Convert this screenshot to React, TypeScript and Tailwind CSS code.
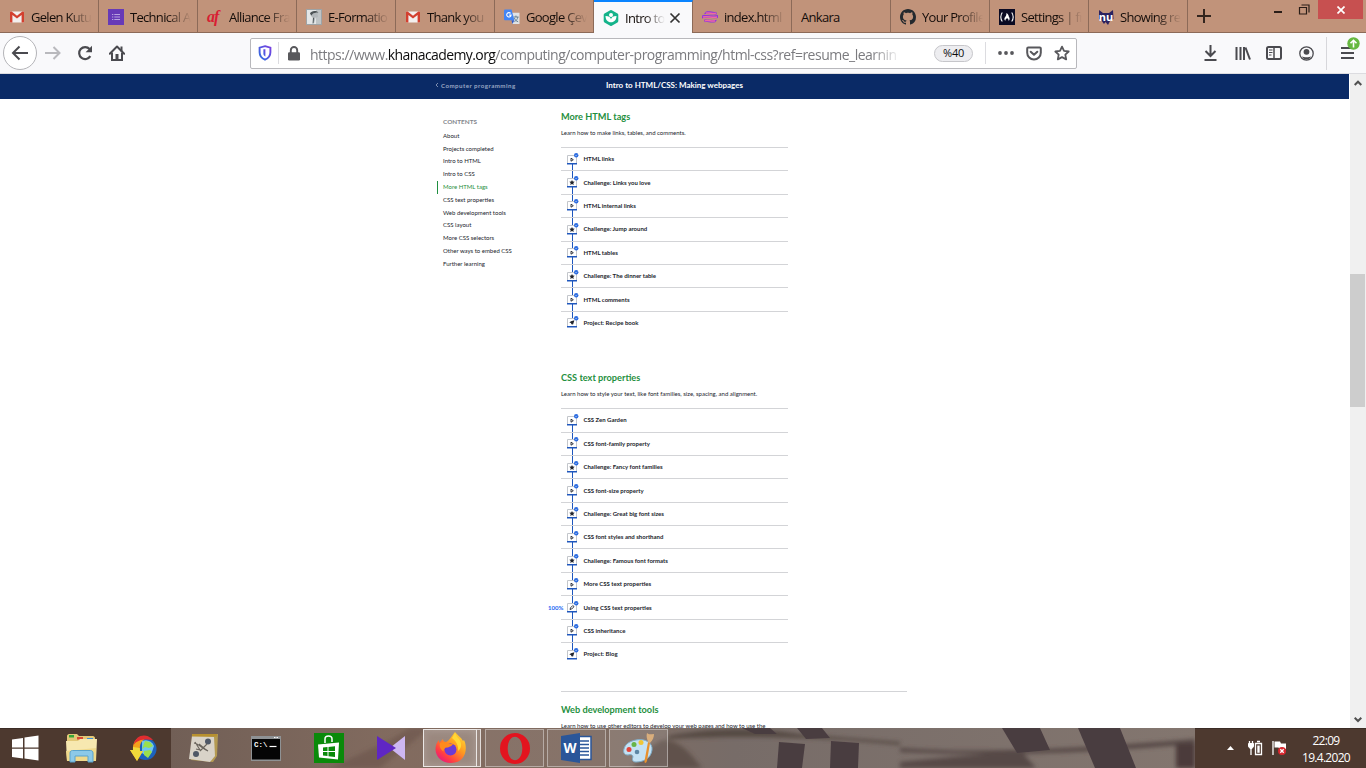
import React from 'react';
import clsx from 'clsx';

type StepKind = 'video' | 'challenge' | 'project' | 'practice';

interface Step {
  title: string;
  kind: StepKind;
  percent?: string;
}

interface BrowserTab {
  title: string;
  icon?: React.ReactNode;
  active?: boolean;
}

const htmlSteps: Step[] = [
  { title: 'HTML links', kind: 'video' },
  { title: 'Challenge: Links you love', kind: 'challenge' },
  { title: 'HTML internal links', kind: 'video' },
  { title: 'Challenge: Jump around', kind: 'challenge' },
  { title: 'HTML tables', kind: 'video' },
  { title: 'Challenge: The dinner table', kind: 'challenge' },
  { title: 'HTML comments', kind: 'video' },
  { title: 'Project: Recipe book', kind: 'project' },
];

const cssSteps: Step[] = [
  { title: 'CSS Zen Garden', kind: 'video' },
  { title: 'CSS font-family property', kind: 'video' },
  { title: 'Challenge: Fancy font families', kind: 'challenge' },
  { title: 'CSS font-size property', kind: 'video' },
  { title: 'Challenge: Great big font sizes', kind: 'challenge' },
  { title: 'CSS font styles and shorthand', kind: 'video' },
  { title: 'Challenge: Famous font formats', kind: 'challenge' },
  { title: 'More CSS text properties', kind: 'video' },
  { title: 'Using CSS text properties', kind: 'practice', percent: '100%' },
  { title: 'CSS inheritance', kind: 'video' },
  { title: 'Project: Blog', kind: 'project' },
];

const contents = [
  'About',
  'Projects completed',
  'Intro to HTML',
  'Intro to CSS',
  'More HTML tags',
  'CSS text properties',
  'Web development tools',
  'CSS layout',
  'More CSS selectors',
  'Other ways to embed CSS',
  'Further learning',
];

/* ---------- tab icons ---------- */

const GmailIcon = () => (
  <svg width="16" height="16" viewBox="0 0 16 16">
    <rect x="1" y="2.5" width="14" height="11" rx="1" fill="#f3efee" />
    <path d="M1 3.5v9.2c0 .5.3.8.8.8H3.400V6L8 9.600 12.600 6v7.500h1.600c.5 0 .8-.3.800-.8V3.500c0-.6-.5-1-1-1h-.7L8 6.800 2.700 2.500H2c-.5 0-1 .4-1 1z" fill="#d3402f" />
  </svg>
);

const FormsIcon = () => (
  <svg width="16" height="16" viewBox="0 0 16 16">
    <path d="M0 0h16v16H0z" fill="#673ab7" />
    <path d="M4 5.500h1.300M6.300 5.500H12M4 8h1.300M6.300 8H12M4 10.500h1.300M6.300 10.500H12" stroke="#b9a4e0" strokeWidth="1.100" />
  </svg>
);

const AllianceIcon = () => (
  <span className="flex h-4 w-4 items-center font-['Liberation_Serif',serif] text-[16px] leading-none font-bold tracking-[-1px] text-[#d81e33] italic">
    af
  </span>
);

const PortraitIcon = () => (
  <svg width="16" height="16" viewBox="0 0 16 16">
    <path d="M0 0h16v16H0z" fill="#9da3a6" />
    <path d="M1 1h14v14H1z" fill="#e3e6e7" />
    <path d="M10 1h5v14h-5z" fill="#bfc4c6" />
    <path d="M4 4.500c1-3 7-3.500 8-.5l-.5 1.500.5 2-1 1H9.500L8 14.500H6.500L7 9 5 7z" fill="#b3b8bb" />
    <path d="M4 4.500c1-3 7-3.500 8.500-1-3 0-5 .5-6 1.500L5.500 6.500zM7 8.500l1 .5-.5 5-.8.5z" fill="#4b5255" />
  </svg>
);

const TranslateIcon = () => (
  <svg width="17" height="16" viewBox="0 0 17 16">
    <path d="M7 3.500h9.500v12H9z" fill="#dfe2e6" />
    <path d="M10 8h5.500M12.700 6.500V8M11 13c2-1 3.500-3 3.700-5M11 9c.7 2 2 3.400 4 4" stroke="#607d8b" fill="none" />
    <path d="M1 0h7l3 11.500H1c-.6 0-1-.4-1-1V1c0-.6.400-1 1-1z" fill="#4285f4" />
    <path d="M7 4.200a2.300 2.300 0 1 0 .5 1.800H5.500" stroke="#fff" strokeWidth="1.200" fill="none" />
    <path d="M8 11.500h3L9 15.500z" fill="#2a56c6" />
  </svg>
);

const KhanIcon = () => (
  <svg width="16" height="16" viewBox="0 0 16 16">
    <path d="M7.200.3a1.500 1.500 0 0 1 1.600 0l5.700 3.200c.5.300.8.800.8 1.400v6.200c0 .6-.3 1.100-.8 1.400l-5.700 3.200a1.500 1.500 0 0 1-1.600 0l-5.700-3.200a1.600 1.600 0 0 1-.8-1.400V4.900c0-.6.300-1.100.8-1.400z" fill="#14b38a" />
    <circle cx="8" cy="5" r="2" fill="#fff" />
    <path d="M2.500 6c3.500 0 5.500 1.800 5.500 3.500C8 7.800 10 6 13.500 6c0 3.800-2.200 6.300-5.500 6.300S2.500 9.800 2.500 6z" fill="#fff" />
  </svg>
);

const StripesIcon = () => (
  <svg width="17" height="16" viewBox="0 0 17 16">
    <path d="M4 2.500c4-1.500 8 1 11 0l1 2.500c-5 1-9-1-14 0zM0 6.500c5-1.500 11 1 17-.5v3C11 10 6 8 0 9.500zM2 11c4-1 9 1 14 0l-2 2.500C9 14.500 5 12.500 3 13.500z" fill="#8d35e0" />
    <path d="M4 4c4-1 7 1 11 0M1 8c5-1 10 1 15 0M3 12c4-1 7 1 11 0" stroke="#ef6aa0" fill="none" strokeWidth="1.400" />
  </svg>
);

const GithubIcon = () => (
  <svg width="16" height="16" viewBox="0 0 16 16" fill="#24292e">
    <path d="M8 0C3.580 0 0 3.580 0 8c0 3.540 2.290 6.530 5.470 7.590.4.070.55-.17.55-.38 0-.19-.01-.82-.01-1.490-2.010.37-2.530-.49-2.690-.94-.09-.23-.48-.94-.82-1.130-.28-.15-.68-.52-.01-.53.63-.01 1.080.58 1.230.82.72 1.210 1.870.87 2.330.66.07-.52.28-.87.51-1.070-1.780-.2-3.640-.89-3.640-3.950 0-.87.31-1.590.82-2.150-.08-.2-.36-1.020.08-2.120 0 0 .67-.21 2.200.82.64-.18 1.320-.27 2-.27s1.360.09 2 .27c1.530-1.040 2.200-.82 2.200-.82.44 1.100.16 1.920.08 2.120.51.56.82 1.270.82 2.150 0 3.070-1.870 3.750-3.650 3.950.29.25.54.73.54 1.480 0 1.070-.01 1.930-.01 2.200 0 .21.15.46.55.38A8.010 8.010 0 0 0 16 8c0-4.420-3.580-8-8-8z" />
  </svg>
);

const CampIcon = () => (
  <svg width="16" height="16" viewBox="0 0 16 16">
    <path d="M0 0h16v16H0z" fill="#0a0a23" />
    <path d="M3.300 3.500c-2 2.500-2 6.500 0 9M12.700 3.500c2 2.500 2 6.500 0 9" stroke="#fff" strokeWidth="1.100" fill="none" />
    <path d="M6.300 12c-1.500-1.500-1-3 0-4.200C7.200 6.700 7.600 5.500 7.300 4c2 .8 2.300 2.500 2.600 3.700 1 1.300 1.100 3-.3 4.300.2-1.500-.6-2-1.500-3-.9 1-1.900 1.500-1.800 3z" fill="#fff" />
  </svg>
);

const NuIcon = () => (
  <span className="relative flex h-4 w-4 items-center justify-center">
    <svg className="absolute inset-0" width="16" height="16" viewBox="0 0 16 16">
      <path d="M1 1l4 3h6l4-3 .5 9L12 12l-2 4-2.500-3L6 15l-3-4-2-1z" fill="#2b2260" />
    </svg>
    <span className="relative mb-[2px] font-['Open_Sans',sans-serif] text-[11px] leading-none font-bold text-white">nu</span>
  </span>
);

const tabs: BrowserTab[] = [
  { title: 'Gelen Kutu', icon: <GmailIcon /> },
  { title: 'Technical A', icon: <FormsIcon /> },
  { title: 'Alliance Fra', icon: <AllianceIcon /> },
  { title: 'E-Formatio', icon: <PortraitIcon /> },
  { title: 'Thank you', icon: <GmailIcon /> },
  { title: 'Google Çev', icon: <TranslateIcon /> },
  { title: 'Intro to', icon: <KhanIcon />, active: true },
  { title: 'index.html', icon: <StripesIcon /> },
  { title: 'Ankara' },
  { title: 'Your Profile', icon: <GithubIcon /> },
  { title: 'Settings | fr', icon: <CampIcon /> },
  { title: 'Showing re', icon: <NuIcon /> },
];

const Tab = ({ title, icon, active }: BrowserTab) => (
  <div
    className={clsx(
      'flex h-[33px] w-[99px] shrink-0 items-center border-r pl-[9px]',
      active ? 'border-t-2 border-r-[#8c6a58] border-t-[#0a84ff] bg-[#f9f9fb]' : 'border-b border-[#8c6a58] pt-[2px]',
    )}
  >
    {icon && <span className="mr-[6px] flex w-4 shrink-0 items-center">{icon}</span>}
    <span
      className={clsx(
        'overflow-hidden pt-[2px] text-[13px] tracking-[-0.700px] whitespace-nowrap text-[#140d0a]',
        active ? 'w-[40px] [mask-image:linear-gradient(90deg,#000_50%,transparent)]' : 'w-[61px]',
        !active && icon && '[mask-image:linear-gradient(90deg,#000_60%,transparent)]',
      )}
    >
      {title}
    </span>
    {active && (
      <svg className="ml-[4px] shrink-0" width="12" height="12" viewBox="0 0 12 12">
        <path d="M1.500 1.500l9 9M10.500 1.500l-9 9" stroke="#333" strokeWidth="1.700" />
      </svg>
    )}
  </div>
);

const TabBar = () => (
  <div className="flex h-[33px] bg-[#c1937a]">
    {tabs.map((tab, i) => (
      <Tab key={i} {...tab} />
    ))}
    <div className="flex flex-1 items-start justify-between border-b border-[#8c6a58]">
      <svg className="mt-[9px] ml-[9px]" width="14" height="14" viewBox="0 0 14 14">
        <path d="M7 0v14M0 7h14" stroke="#33251e" strokeWidth="2" />
      </svg>
      <div className="flex items-start pr-[3px]">
        <svg className="mt-[4px] mr-[8px]" width="37" height="12" viewBox="0 0 37 12">
          <path d="M1 8h8" stroke="#2a1d17" strokeWidth="2" />
          <path d="M26.500 3.500h7v6.500h-7zM28.500 1h7.500v7.500" stroke="#2a1d17" strokeWidth="1.200" fill="none" />
        </svg>
        <div className="flex h-[19px] w-[45px] items-center justify-center bg-[#c75050]">
          <svg width="8" height="8" viewBox="0 0 8 8">
            <path d="M.5.500l7 7M7.500.500l-7 7" stroke="#fff" strokeWidth="1.700" />
          </svg>
        </div>
      </div>
    </div>
  </div>
);

const Toolbar = () => (
  <div className="flex h-[41px] items-center border-b border-[#dcdce0] bg-[#f9f9fb]">
    <div className="ml-[3px] flex h-[34px] w-[34px] items-center justify-center rounded-full border border-[#b4b4b8] bg-white">
      <svg width="18" height="16" viewBox="0 0 18 16">
        <path d="M17 8H2.500M8.500 1.500L2 8l6.500 6.500" stroke="#4a4a4f" strokeWidth="2" fill="none" />
      </svg>
    </div>
    <svg className="ml-[8px]" width="16" height="14" viewBox="0 0 16 14">
      <path d="M0 7h14M8.500 1L14.500 7l-6 6" stroke="#b9b9bd" strokeWidth="2" fill="none" />
    </svg>
    <svg className="ml-[16px]" width="16" height="16" viewBox="0 0 16 16">
      <path d="M13.300 11.200A6 6 0 1 1 12.600 4" stroke="#4a4a4f" strokeWidth="2.200" fill="none" />
      <path d="M15 .8v6.400H8.600z" fill="#4a4a4f" />
    </svg>
    <svg className="ml-[16px]" width="16" height="16" viewBox="0 0 16 16">
      <path d="M.8 8.700L8 1.500l7.200 7.200" stroke="#4a4a4f" strokeWidth="2" fill="none" strokeLinejoin="round" strokeLinecap="round" />
      <path d="M3 7.500V15h10V7.500" stroke="#4a4a4f" strokeWidth="2" fill="none" />
      <path d="M6.500 9h3v6h-3z" fill="#4a4a4f" />
      <path d="M11.500 1.500h2v5h-2z" fill="#4a4a4f" />
    </svg>

    <div className="ml-[125px] flex h-[31px] w-[827px] shrink-0 items-center rounded-[2px] border border-[#b8b8bc] bg-white">
      <svg className="ml-[7px]" width="14" height="16" viewBox="0 0 14 16">
        <defs>
          <linearGradient id="shield" x1="0" y1="1" x2="1" y2="0">
            <stop offset="0" stopColor="#2b6fe0" />
            <stop offset="1" stopColor="#7a3fe0" />
          </linearGradient>
        </defs>
        <path d="M7 1.200l5.400 1.500v4.500c0 3.500-2 6-5.400 7.500-3.400-1.500-5.400-4-5.400-7.500V2.700z" fill="#fff" stroke="url(#shield)" strokeWidth="1.900" />
        <path d="M5.400 4.200h2v7.300c-1.300-.6-2-1.500-2-3z" fill="url(#shield)" />
      </svg>
      <div className="ml-[6px] h-[22px] w-px bg-[#dcdce0]" />
      <svg className="ml-[9px]" width="12" height="15" viewBox="0 0 12 15">
        <path d="M2.800 7V4.200a3.200 3.200 0 0 1 6.400 0V7" stroke="#58585c" strokeWidth="1.900" fill="none" />
        <rect x="0" y="6.300" width="12" height="8.200" rx="1.200" fill="#58585c" />
      </svg>
      <div className="ml-[10px] w-[591px] overflow-hidden pt-[2px] text-[14px] tracking-[-0.510px] whitespace-nowrap text-[#7b7b7f] [mask-image:linear-gradient(90deg,#000_95%,transparent)]">
        https://www.<span className="tracking-[-0.600px] text-[#0c0c0d]">khanacademy.org</span>/computing/computer-programming/html-css?ref=resume_learnin
      </div>
      <div className="ml-[33px] flex h-[17px] w-[39px] items-center justify-center rounded-full border border-[#c6c6ca] bg-[#ededf0] pt-px text-[11px] tracking-[-0.300px] text-[#0c0c0d]">
        %40
      </div>
      <div className="ml-[12px] h-[22px] w-px bg-[#dcdce0]" />
      <svg className="ml-[12px]" width="16" height="4" viewBox="0 0 16 4" fill="#58585c">
        <circle cx="2" cy="2" r="1.900" />
        <circle cx="8" cy="2" r="1.900" />
        <circle cx="14" cy="2" r="1.900" />
      </svg>
      <svg className="ml-[12px]" width="16" height="15" viewBox="0 0 16 15" fill="none" stroke="#58585c" strokeWidth="2">
        <path d="M2.200 1.500h11.600c.6 0 1 .4 1 1v4.200a6.800 6.800 0 0 1-13.600 0V2.500c0-.6.400-1 1-1z" />
        <path d="M4.700 5.700L8 8.800l3.300-3.100" strokeLinecap="round" strokeLinejoin="round" />
      </svg>
      <svg className="ml-[12px]" width="16" height="16" viewBox="0 0 16 16">
        <path d="M8 1.600l2 4.300 4.700.6-3.400 3.200.9 4.700L8 12.100l-4.200 2.300.9-4.700L1.300 6.500 6 5.900z" fill="none" stroke="#58585c" strokeWidth="1.800" strokeLinejoin="round" />
      </svg>
    </div>

    <svg className="ml-[127px]" width="13" height="16" viewBox="0 0 13 16" fill="none" stroke="#4a4a4f" strokeWidth="2">
      <path d="M6.500 0v11M1.500 6l5 5 5-5M.500 15h12" />
    </svg>
    <svg className="ml-[18px]" width="16" height="15" viewBox="0 0 16 15" stroke="#4a4a4f" strokeWidth="2">
      <path d="M1.500 1v13M5.500 1v13M9 1v13" />
      <path d="M10.500 1.500l4.500 12" />
    </svg>
    <svg className="ml-[15px]" width="16" height="14" viewBox="0 0 16 14" fill="none" stroke="#4a4a4f">
      <rect x="1" y="1" width="14" height="12" rx="1.500" strokeWidth="2" />
      <path d="M8 1v12" strokeWidth="1.500" />
      <path d="M3 4h3.500M3 6.500h3.500M3 9h2.500" />
    </svg>
    <svg className="ml-[17px]" width="15" height="15" viewBox="0 0 15 15">
      <circle cx="7.500" cy="7.500" r="6.700" fill="none" stroke="#4a4a4f" strokeWidth="1.300" />
      <circle cx="7.500" cy="5.800" r="2.900" fill="#4a4a4f" />
      <path d="M2.800 10.200c2 1.500 7.400 1.500 9.400 0-1 2.200-2.800 3.200-4.700 3.200s-3.700-1-4.700-3.200z" fill="#4a4a4f" />
    </svg>
    <div className="ml-[12px] h-[33px] w-px bg-[#d7d7db]" />
    <div className="relative ml-[14px] flex h-[12px] w-[13px] flex-col justify-between">
      <div className="h-[2px] bg-[#4a4a4f]" />
      <div className="h-[2px] bg-[#4a4a4f]" />
      <div className="h-[2px] bg-[#4a4a4f]" />
      <svg className="absolute -top-[10px] left-[6px]" width="13" height="13" viewBox="0 0 13 13">
        <circle cx="6.500" cy="6.500" r="6.200" fill="#66b840" />
        <path d="M6.500 10.500v-7M3.500 6.300l3-3 3 3" stroke="#fff" strokeWidth="1.600" fill="none" />
      </svg>
    </div>
  </div>
);

/* ---------- lesson list ---------- */

const StepIcon = ({ kind }: { kind: StepKind }) => (
  <svg className="relative mb-[1px] shrink-0" width="12" height="12" viewBox="0 0 12 12">
    <path d="M.500 2.500h9v8h-9z" fill="#fff" stroke="#c3c6cb" strokeWidth="1" />
    <path d="M0 10h10v1.500H0z" fill="#1f57bd" />
    {kind === 'video' && <path d="M4 5.200L6.300 6.700 4 8.200z" fill="#fff" stroke="#21242c" strokeWidth=".9" />}
    {kind === 'challenge' && (
      <path d="M5 4l.8 1.600 1.900.2-1.400 1.300.4 1.900L5 8.100 3.300 9l.4-1.900-1.400-1.300 1.900-.2z" fill="#21242c" />
    )}
    {kind === 'project' && <path d="M7.400 4.200L5.900 9 4.900 7.600 4 8.700V7L2.300 6.600 4 5.200z" fill="#21242c" />}
    {kind === 'practice' && (
      <path d="M3 8.500l.5-1.700 2.300-2.300 1.200 1.200-2.300 2.300z" fill="#fff" stroke="#21242c" strokeWidth=".9" />
    )}
    <circle cx="9.200" cy="2.200" r="2.200" fill="#2b6be0" />
    <path d="M8.200 2.300l.8.7 1.200-1.300" stroke="#dbe7fb" strokeWidth=".5" fill="none" />
  </svg>
);

interface StepRowProps {
  step: Step;
  first: boolean;
  last: boolean;
}

const StepRow = ({ step, first, last }: StepRowProps) => (
  <li className="relative flex h-[23.4px] items-center border-t border-[#d3d4d7] pl-[6px]">
    {step.percent && (
      <span className="absolute -left-[13px] text-[6px] font-bold text-[#1865f2]">{step.percent}</span>
    )}
    <div className="relative flex items-center self-stretch">
      <div
        className={clsx(
          'absolute left-[5px] w-px bg-[#1f57bd]',
          first ? 'top-[14px]' : 'top-0',
          last ? 'h-[8px]' : 'bottom-0',
        )}
      />
      <StepIcon kind={step.kind} />
    </div>
    <span className="mb-[0.800px] ml-[4.500px] text-[6px] font-bold text-[#21242c]">{step.title}</span>
  </li>
);

interface LessonProps {
  title: string;
  description: string;
  steps?: Step[];
}

const Lesson = ({ title, description, steps = [] }: LessonProps) => (
  <section className="w-[227px]">
    <h2 className="h-[12px] text-[9.200px] leading-[12px] font-bold whitespace-nowrap text-[#1f8f40]">{title}</h2>
    <p className="mt-[6px] h-[8px] text-[6px] leading-[8px] whitespace-nowrap text-[#21242c]">{description}</p>
    {steps.length > 0 && (
      <ul className="mt-[10px]">
        {steps.map((step, i) => (
          <StepRow key={step.title} step={step} first={i === 0} last={i === steps.length - 1} />
        ))}
      </ul>
    )}
  </section>
);

const CoursePage = () => (
  <div className="flex h-full w-[1349px] flex-col overflow-hidden bg-white font-['Lato',sans-serif]">
    <header className="flex h-[25px] shrink-0 items-center bg-[#0a2a66]">
      <div className="mb-[2px] flex w-[606px] items-center pl-[435px] text-[6.200px] font-bold tracking-[0.450px] text-[#98a6c3]">
        <svg className="mr-[2px]" width="4" height="6" viewBox="0 0 4 6">
          <path d="M3 1L1 3l2 2" stroke="#98a6c3" strokeWidth=".8" fill="none" />
        </svg>
        Computer programming
      </div>
      <h1 className="mb-[3px] text-[8px] font-bold whitespace-nowrap text-white">Intro to HTML/CSS: Making webpages</h1>
    </header>
    <div className="flex">
      <nav className="ml-[437px] w-[124px] pt-[18px]">
        <h3 className="h-[12.800px] pl-[6px] text-[6.400px] leading-[10px] font-bold text-[#83868c]">CONTENTS</h3>
        <ul>
          {contents.map((item) => (
            <li
              key={item}
              className={clsx(
                'h-[12.800px] border-l pl-[5px] text-[6px] leading-[12.800px]',
                item === 'More HTML tags' ? 'border-[#1f8f40] text-[#1f8f40]' : 'border-transparent text-[#21242c]',
              )}
            >
              {item}
            </li>
          ))}
        </ul>
      </nav>
      <main className="w-[346px] pt-[12px]">
        <Lesson title="More HTML tags" description="Learn how to make links, tables, and comments." steps={htmlSteps} />
        <div className="h-[38px]" />
        <Lesson
          title="CSS text properties"
          description="Learn how to style your text, like font families, size, spacing, and alignment."
          steps={cssSteps}
        />
        <div className="mt-[25.500px] mb-[12px] h-px bg-[#d3d4d7]" />
        <Lesson title="Web development tools" description="Learn how to use other editors to develop your web pages and how to use the" />
      </main>
    </div>
  </div>
);

const Scrollbar = () => (
  <div className="flex w-[17px] flex-col items-center border-l border-white bg-[#f0f0f0]">
    <svg className="mt-[6px]" width="8" height="7" viewBox="0 0 8 7">
      <path d="M.7 5L4 1.700 7.300 5" stroke="#505050" strokeWidth="2" fill="none" />
    </svg>
    <div className="mt-[187px] h-[133px] w-[15px] self-start bg-[#cdcdcd]" />
    <svg className="mt-auto mb-[5px]" width="8" height="7" viewBox="0 0 8 7">
      <path d="M.7 1.700L4 5l3.300-3.300" stroke="#505050" strokeWidth="2" fill="none" />
    </svg>
  </div>
);

/* ---------- taskbar ---------- */

// Fabric photo that shows through behind the running apps
const FabricBackdrop = () => (
  <svg className="absolute inset-0" width="1024" height="40" viewBox="171 0 1024 40" preserveAspectRatio="none">
    <defs>
      <linearGradient id="fabric" x1="0" x2="1" y1="0" y2="0">
        <stop offset="0" stopColor="#715f56" />
        <stop offset=".22" stopColor="#826b5f" />
        <stop offset=".4" stopColor="#806c61" />
        <stop offset=".55" stopColor="#776c68" />
        <stop offset="1" stopColor="#83766f" />
      </linearGradient>
      <filter id="soft">
        <feGaussianBlur stdDeviation="2" />
      </filter>
      <filter id="edge">
        <feGaussianBlur stdDeviation=".6" />
      </filter>
    </defs>
    <path d="M171 0h1024v40H171z" fill="url(#fabric)" />
    <g filter="url(#soft)">
      <path d="M330 40l60-28 20-12h20l-50 40z" fill="#665047" opacity=".5" />
      <path d="M662 12c20 0 30 16 40 28h-70l10-16z" fill="#56463f" opacity=".7" />
      <path d="M668 8c50-9 90-8 130-2l102 8v3c-80-8-150-10-232-6z" fill="#554843" />
      <path d="M900 20c60 4 130 5 295-9v5c-120 10-200 12-295 8z" fill="#544745" />
      <path d="M900 34c40-4 80-8 122-10l14 16H900z" fill="#564947" />
      <path d="M1176 16h19v24h-19z" fill="#4b3b3a" />
    </g>
    <g filter="url(#edge)" fill="#4a3d41">
      <path d="M742 0h28l7 6h-22zM797 0h25l8 10-24 1zM779 14l26 2-3 24h-25zM831 13l28 2-1 25h-28z" />
      <path d="M1002 0h38l10 22-33 3zM1078 0h42l16 40h-41z" />
    </g>
  </svg>
);

const StartIcon = () => (
  <svg width="27" height="26" viewBox="0 0 27 26" fill="#fff">
    <path d="M0 4.500L11 3v9.500H0zM12.500 2.600L26.500.5v12h-14zM0 13.800h11v9.600L0 22zM12.500 13.800h14v11.700l-14-2z" />
  </svg>
);

const ExplorerIcon = () => (
  <svg width="33" height="30" viewBox="0 0 33 30">
    <path d="M2 3c0-1 1-2 2-2h8l2 2h14c1 0 2 1 2 2v22H2z" fill="#e3c877" />
    <path d="M4 2h5v2.500H4z" fill="#38a838" />
    <path d="M12 4h6v2.500h-6z" fill="#d94a32" />
    <path d="M22 5h6v2.500h-6z" fill="#3b8fd8" />
    <path d="M1 8h12l2-2h17l-1 22H2z" fill="#f7e8b0" />
    <path d="M1 18l30-3v13H2z" fill="#efd98c" />
    <path d="M5 29V20c0-1.500 1-2.500 2.500-2.500h18c1.500 0 2.500 1 2.500 2.500v9h-5v-6H10v6z" fill="#8cc9e8" stroke="#5aa3cc" />
  </svg>
);

const GlobeArrowIcon = () => (
  <svg width="27" height="27" viewBox="0 0 27 27">
    <circle cx="15.500" cy="14" r="11" fill="#1c62bd" />
    <path d="M12 6c5-2 10 0 12 5l-2 6-4 5-6-4z" fill="#6fc5ef" />
    <path d="M15 6l5 1 3 4-4 2-4-1-3 2zM14 16l6-1 2 2-4 6-4-3z" fill="#9adf4d" />
    <path d="M19 2C10-1 2 5 3 15H0l7 11 6-10h-3C9 9 12 4 19 2z" fill="#f3a11c" />
    <path d="M23 5C17-2 6-1 3.500 10 8 4 15 4 23 5z" fill="#e02d30" />
    <path d="M3 15H0l7 11 6-10h-3l-.2-3-6.800-1z" fill="#efd93a" />
  </svg>
);

const NotesIcon = () => (
  <svg width="30" height="30" viewBox="0 0 30 30">
    <path d="M3 1l26 0-1 22-4 6-22-2z" fill="#b49a52" />
    <path d="M3 3l22 1 1 19-5 6L0 26z" fill="#d9d3c8" />
    <path d="M3 1h25v2.500H3z" fill="#b8912f" />
    <circle cx="19" cy="8.500" r="3" fill="#4f5866" />
    <circle cx="7" cy="21" r="3" fill="#4f5866" />
    <path d="M5 10c5 1 9 6 14 8M6 9l5 8-4-1M11 18l7-7M10 11l6 5 3 2" stroke="#6a645c" fill="none" strokeWidth="1.100" />
  </svg>
);

const ConsoleIcon = () => (
  <svg width="30" height="25" viewBox="0 0 30 25">
    <path d="M0 0h30v25H0z" fill="#8f9294" />
    <path d="M1 3h28v20.500H1z" fill="#050505" />
    <path d="M23 1.500h1.500M25.500 1.500H27" stroke="#fff" />
    <path d="M18.500 10.500h7" stroke="#fff" strokeWidth="1.200" />
    <text x="3" y="11" fill="#fff" fontSize="7.500" fontWeight="700" fontFamily="Liberation Mono, monospace">
      C:\
    </text>
  </svg>
);

const StoreIcon = () => (
  <svg width="30" height="30" viewBox="0 0 30 30">
    <path d="M0 0h30v30H0z" fill="#0a8a0a" />
    <path d="M4 11.500l21-2-1 17-19-2z" fill="#fff" />
    <path d="M11 10V6c0-4 7-4 7 0v3" stroke="#fff" strokeWidth="1.500" fill="none" />
    <path d="M9 14.500l4.500-.5v4H9zM14.500 13.900l6.500-.7V18h-6.500zM9 19h4.500v4L9 22.500zM14.500 19H21v5l-6.500-.8z" fill="#0a8a0a" />
  </svg>
);

const BowtieIcon = () => (
  <svg width="28" height="24" viewBox="0 0 28 24">
    <path d="M28 0L14 11v2l14 11z" fill="#cdb7f2" />
    <path d="M0 0l19 12L0 24z" fill="#5f26c4" />
  </svg>
);

const FirefoxIcon = () => (
  <svg width="31" height="32" viewBox="0 0 31 32">
    <defs>
      <linearGradient id="fox" x1="1" y1="0" x2=".2" y2="1">
        <stop offset="0" stopColor="#ffe83c" />
        <stop offset=".45" stopColor="#ff9a1f" />
        <stop offset=".8" stopColor="#ff3b45" />
        <stop offset="1" stopColor="#e31587" />
      </linearGradient>
    </defs>
    <path d="M20 0c2 3 6 5 8 9l1-1c4 8 2 23-13 23C7 31 .5 25 .5 17c0-4 1.500-7 3.500-9v3l4-4c0 2 1 3 3 3 3-1 5-5 9-10z" fill="url(#fox)" />
    <circle cx="15.500" cy="17.500" r="6" fill="#6b3bd6" />
    <path d="M5 11c3-2 6-1 8 1h5c-1 2-3 2.500-5 3.500-3-.5-4.500 1.500-4.500 4-3-2-4.500-5-3.500-8.500z" fill="#ff8a1c" />
    <path d="M17 6c4 3 7 8 6 13 4-3 4-8 1-12-2-2-3-4-4-6z" fill="#ffd836" />
  </svg>
);

const OperaIcon = () => (
  <svg width="30" height="31" viewBox="0 0 30 31">
    <path fillRule="evenodd" d="M15 0a15 15.500 0 1 0 0 31 15 15.500 0 1 0 0-31zM15 3.800c4.200 0 7.300 5 7.300 11.700s-3.100 11.700-7.300 11.700-7.300-5-7.300-11.700S10.800 3.800 15 3.800z" fill="#e3141f" />
  </svg>
);

const WordIcon = () => (
  <svg width="31" height="30" viewBox="0 0 31 30">
    <path d="M14 3.500h16v23H14z" fill="#fff" stroke="#2a5699" strokeWidth="1.500" />
    <path d="M18 8h10M18 11.500h10M18 15h10M18 18.500h10M18 22h10" stroke="#2a5699" strokeWidth="1.500" />
    <path d="M0 3l19-3v30L0 27z" fill="#2a5699" />
    <text x="2.500" y="20" fill="#fff" fontSize="13.500" fontWeight="700" fontFamily="Open Sans, sans-serif">
      W
    </text>
  </svg>
);

const PaintIcon = () => (
  <svg width="32" height="31" viewBox="0 0 32 31">
    <path d="M13 7c9-2 17 3 16 10-1 8-8 12-16 12-4 0-4-3-3-5 0-2-2-3-5-2-4 0-5-3-4-6C2 11 7 8 13 7z" fill="#c5e2f3" stroke="#7fadc9" />
    <circle cx="6" cy="16.500" r="2.500" fill="#e2453c" />
    <circle cx="11" cy="11.500" r="2.500" fill="#67b548" />
    <circle cx="18" cy="9.500" r="2.500" fill="#f0c636" />
    <circle cx="14" cy="19" r="2.300" fill="#5d87a5" />
    <path d="M25 9l2 1-3 18c-1 3-3 2-2.500 0z" fill="#e8912d" />
    <path d="M24 0c2 2 4 1 7 1 0 3-1 6-4 9l-2-1c-1-3-2-6-1-9z" fill="#d9ae7c" />
  </svg>
);

const pinned = [<NotesIcon />, <ConsoleIcon />, <StoreIcon />, <BowtieIcon />];

const Taskbar = () => (
  <div className="flex h-[40px] bg-[#4d392f] shadow-[inset_0_1px_0_#3c2d26]">
    <div className="flex w-[171px] items-center">
      <div className="flex w-[50px] justify-center">
        <StartIcon />
      </div>
      <div className="flex w-[62px] justify-center">
        <ExplorerIcon />
      </div>
      <div className="flex w-[59px] justify-center pl-[3px]">
        <GlobeArrowIcon />
      </div>
    </div>
    <div className="relative w-[1024px]">
      <FabricBackdrop />
      <div className="relative flex h-full items-center pl-[2px]">
        {pinned.map((icon, i) => (
          <div key={i} className="flex w-[62.250px] justify-center">
            {icon}
          </div>
        ))}
        <div className="ml-px flex h-[38px] w-[54px] items-center justify-center border border-white/80 bg-white/20 shadow-[inset_0_0_8px_rgba(255,255,255,0.2)]">
          <FirefoxIcon />
        </div>
        <div className="h-[38px] w-[4px] border border-l-0 border-white/70 bg-white/20" />
        <div className="ml-[4px] flex h-[38px] w-[59px] items-center justify-center border border-white/40 bg-white/5">
          <OperaIcon />
        </div>
        <div className="ml-[3px] flex h-[38px] w-[59px] items-center justify-center border border-white/40 bg-white/5">
          <WordIcon />
        </div>
        <div className="ml-[3px] flex h-[38px] w-[59px] items-center justify-center border border-white/40 bg-white/10">
          <PaintIcon />
        </div>
      </div>
    </div>
    <div className="flex flex-1 items-center text-white">
      <svg className="ml-[32px]" width="7" height="4" viewBox="0 0 7 4">
        <path d="M0 4l3.500-4L7 4z" fill="#fff" />
      </svg>
      <svg className="ml-[14px]" width="15" height="16" viewBox="0 0 15 16" fill="none" stroke="#fff">
        <path d="M1.500 1v3M4.500 1v3M3 8v7" strokeWidth="1.300" />
        <path d="M.500 3.500h5v3L4 8.500H2L.500 6.500z" fill="#fff" />
        <path d="M7.500 3.500h6v11h-6zM9 1.500h3" strokeWidth="1.300" />
        <path d="M9.300 5.500h2.400v7.300H9.300z" fill="#fff" stroke="none" />
      </svg>
      <svg className="ml-[9px]" width="15" height="16" viewBox="0 0 15 16">
        <path d="M1 1v14" stroke="#fff" strokeWidth="1.300" />
        <path d="M2.500 1.500H8l1 2h5V9H7.500l-1-1.500h-4z" fill="#fff" />
        <circle cx="10" cy="11" r="4" fill="#d9272e" />
        <path d="M8.300 9.300l3.400 3.400M11.700 9.300l-3.400 3.400" stroke="#fff" strokeWidth="1.300" />
      </svg>
      <div className="ml-[13px] flex w-[52px] flex-col items-center pt-px text-[12px] leading-[17px] tracking-[-0.700px]">
        <span>22:09</span>
        <span>19.4.2020</span>
      </div>
    </div>
  </div>
);

export default function App() {
  return (
    <div className="flex h-[768px] w-[1366px] flex-col overflow-hidden bg-white font-['Open_Sans','Noto_Sans',sans-serif]">
      <TabBar />
      <Toolbar />
      <div className="flex h-[654px]">
        <CoursePage />
        <Scrollbar />
      </div>
      <Taskbar />
    </div>
  );
}
